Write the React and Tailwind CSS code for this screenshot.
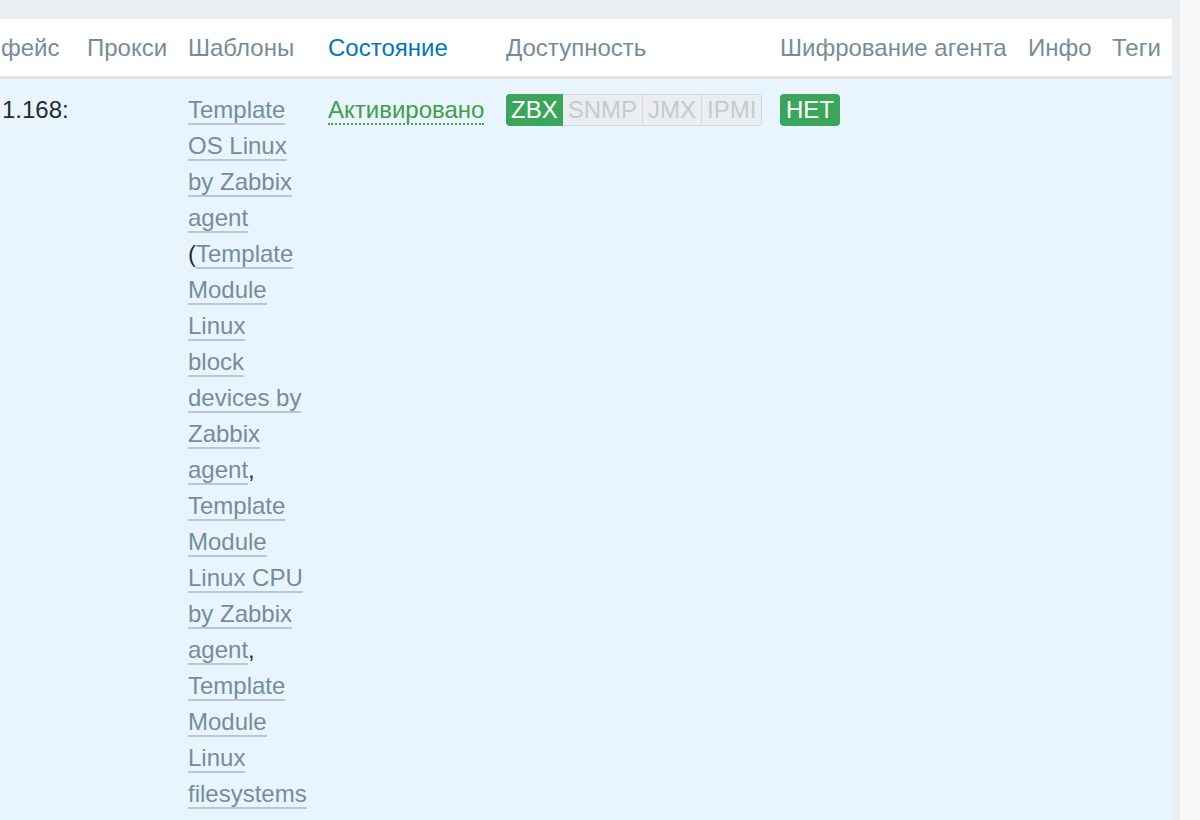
const cols = [
  { w: 'w-[87px]', label: 'фейс' },
  { w: 'w-[101px]', label: 'Прокси' },
  { w: 'w-[140px]', label: 'Шаблоны' },
  { w: 'w-[178px]', label: 'Состояние', active: true },
  { w: 'w-[274px]', label: 'Доступность' },
  { w: 'w-[248px]', label: 'Шифрование агента' },
  { w: 'w-[84px]', label: 'Инфо' },
  { w: 'w-[60px]', label: 'Теги' },
]

const templates = [
  'Template Module Linux block devices by Zabbix agent',
  'Template Module Linux CPU by Zabbix agent',
  'Template Module Linux filesystems by Zabbix agent',
  'Template Module Linux generic by Zabbix agent',
  'Template Module Linux memory by Zabbix agent',
]

function Link({ children }) {
  return (
    <span className="text-[#768d99] border-b-2 border-[#bcc7cd]">{children}</span>
  )
}

function Badge({ children, on, first, last }) {
  return (
    <span
      className={`h-[32px] px-[5px] flex items-center ${
        on
          ? 'bg-[#3ba55c] text-white'
          : 'bg-[#ebeef0] text-[#c3cbd0] border border-[#d4dade] border-l-0'
      } ${first ? 'rounded-l-[4px]' : ''} ${last ? 'rounded-r-[4px]' : ''}`}
    >
      {children}
    </span>
  )
}

export default function App() {
  return (
    <div
      className="w-[1200px] h-[820px] overflow-hidden flex bg-[#f9f9f9] text-[24px] text-[#1f2c33]"
      style={{ fontFamily: '"Liberation Sans", Arial, sans-serif' }}
    >
      <div className="w-[1180px] bg-[#ebeef0] pt-[19px] flex flex-col shrink-0">
        <div className="w-[1172px] flex-1 flex flex-col">
          {/* шапка таблицы */}
          <div className="h-[60px] bg-white border-b-[3px] border-[#dfe4e7] flex items-center shrink-0">
            {cols.map((c, i) => (
              <div
                key={c.label}
                className={`${c.w} shrink-0 whitespace-nowrap ${i === 0 ? 'pl-[1px]' : ''} ${
                  c.active ? 'text-[#0275b8]' : 'text-[#768d99]'
                }`}
              >
                {c.label}
              </div>
            ))}
          </div>

          {/* строка */}
          <div className="flex-1 bg-[#e8f5ff] flex items-start pt-[13px] leading-[36px]">
            <div className="w-[87px] shrink-0 pl-[2px]">1.168:</div>
            <div className="w-[101px] shrink-0"></div>
            <div className="w-[140px] shrink-0">
              <div className="w-[117px]">
                <Link>Template OS Linux by Zabbix agent</Link> (
                {templates.map((t, i) => (
                  <span key={t}>
                    <Link>{t}</Link>
                    {i < templates.length - 1 ? ', ' : ')'}
                  </span>
                ))}
              </div>
            </div>
            <div className="w-[178px] shrink-0">
              <span className="text-[#429e47] border-b-2 border-dotted border-[#429e47]">
                Активировано
              </span>
            </div>
            <div className="w-[274px] shrink-0 h-[36px] flex items-center">
              <Badge on first>ZBX</Badge>
              <Badge>SNMP</Badge>
              <Badge>JMX</Badge>
              <Badge last>IPMI</Badge>
            </div>
            <div className="w-[248px] shrink-0 h-[36px] flex items-center">
              <span className="h-[32px] px-[6px] flex items-center bg-[#3ba55c] text-white rounded-[4px]">
                НЕТ
              </span>
            </div>
            <div className="w-[84px] shrink-0"></div>
            <div className="w-[60px] shrink-0"></div>
          </div>
        </div>
      </div>
    </div>
  )
}
